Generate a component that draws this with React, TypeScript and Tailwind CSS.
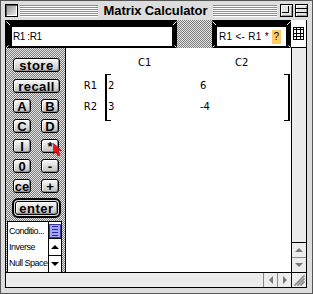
import React from 'react';

const dots =
  'bg-[repeating-conic-gradient(#7a7a7a_0%_25%,#e6e6e6_0%_50%)] bg-[length:2px_2px]';
const btn =
  'flex items-center justify-center h-[14px] border border-black rounded-[3px] bg-[linear-gradient(#f8f8f8,#c2c2c2)] shadow-[inset_1px_1px_0_#fff,inset_-1px_-1px_0_#8c8c8c] font-bold leading-none text-black';

function Corners({ w, h }: { w: number; h: number }) {
  return (
    <svg className="absolute left-0 top-0" width={w} height={h}>
      <g stroke="#fff" strokeWidth="1">
        <line x1="0.5" y1="1.5" x2="4" y2="5" />
        <line x1={w - 0.5} y1="1.5" x2={w - 4} y2="5" />
        <line x1="0.5" y1={h - 0.5} x2="2.5" y2={h - 2.5} />
        <line x1={w - 0.5} y1={h - 0.5} x2={w - 2.5} y2={h - 2.5} />
      </g>
    </svg>
  );
}

function Tri({ dir, fill = '#777' }: { dir: 'up' | 'down' | 'left' | 'right'; fill?: string }) {
  const vert = dir === 'up' || dir === 'down';
  const pts = {
    up: '0,4 4,0 8,4',
    down: '0,0 8,0 4,4',
    left: '4,0 4,8 0,4',
    right: '0,0 4,4 0,8',
  }[dir];
  return (
    <svg width={vert ? 8 : 4} height={vert ? 4 : 8}>
      <polygon points={pts} fill={fill} />
    </svg>
  );
}

function Stripes({ className }: { className: string }) {
  return (
    <div
      className={`h-[12px] bg-[repeating-linear-gradient(#8c8c8c_0px,#8c8c8c_1px,#fff_1px,#fff_2px)] ${className}`}
    />
  );
}

export default function App() {
  const keys = [
    ['A', 'B'],
    ['C', 'D'],
    ['I', '*'],
    ['0', '-'],
    ['ce', '+'],
  ];

  return (
    <div className="w-[313px] h-[294px] bg-[#dddddd] border border-[#555] flex flex-col font-['Liberation_Sans',sans-serif] text-black overflow-hidden">
      {/* title bar */}
      <div className="h-[19px] flex items-center pl-[4px] pr-[4px] shrink-0">
        <div className="w-[13px] h-[13px] border border-black bg-[linear-gradient(135deg,#8a8a8a,#f4f4f4)] shadow-[inset_1px_1px_0_#555,inset_-1px_-1px_0_#fff]" />
        <Stripes className="ml-[2px] w-[78px]" />
        <div className="w-[115px] text-center text-[13px] font-bold leading-none tracking-[-0.1px]">
          Matrix Calculator
        </div>
        <Stripes className="flex-1" />
        <div className="ml-[3px] w-[13px] h-[13px] border border-black bg-[#e4e4e4] shadow-[inset_1px_1px_0_#fff,inset_-1px_-1px_0_#999] relative">
          <div className="absolute left-[1px] top-[1px] w-[7px] h-[7px] border-r border-b border-black" />
        </div>
        <div className="ml-[2px] w-[13px] h-[13px] border border-black bg-[#e4e4e4] shadow-[inset_1px_1px_0_#fff,inset_-1px_-1px_0_#999] flex flex-col justify-center gap-[3px]">
          <div className="h-[1px] bg-black" />
          <div className="h-[1px] bg-black" />
        </div>
      </div>

      {/* content */}
      <div className="ml-[4px] w-[302px] border-x border-black flex flex-col shrink-0">
        {/* toolbar */}
        <div className="flex h-[28px]">
          <div className="w-[171px] bg-black pt-[7px] pb-[2px] pl-[6px] pr-[5px] relative">
            <Corners w={171} h={28} />
            <div className="h-full bg-white flex items-center pl-[1px] text-[10px] tracking-[-0.4px]">
              R1 :R1
            </div>
          </div>
          <div className={`w-[35px] ${dots}`} />
          <div className="w-[79px] bg-black pt-[7px] pb-[2px] px-[5px] relative">
            <Corners w={79} h={28} />
            <div className="h-full bg-white flex items-center pl-[2px] text-[10px] tracking-[0.3px] whitespace-nowrap">
              R1 &lt;- R1 *
              <span className="ml-[3px] bg-[#ffcc66] h-[14px] w-[9px] flex items-center justify-center">?</span>
            </div>
          </div>
          <div className="w-[15px] bg-white border-b border-black flex items-center justify-center">
            <svg width="11" height="13" viewBox="0 0 11 13">
              <g stroke="#000" strokeWidth="1" fill="none">
                <rect x="0.5" y="0.5" width="10" height="12" />
                <line x1="0.5" y1="2.5" x2="10.5" y2="2.5" />
                <line x1="0.5" y1="6.5" x2="10.5" y2="6.5" />
                <line x1="0.5" y1="9.5" x2="10.5" y2="9.5" />
                <line x1="3.5" y1="0.5" x2="3.5" y2="12.5" />
                <line x1="7.5" y1="0.5" x2="7.5" y2="12.5" />
              </g>
            </svg>
          </div>
        </div>

        {/* body */}
        <div className="flex h-[224px]">
          {/* keypad panel */}
          <div className={`w-[60px] border-r border-black flex flex-col pt-[10px] relative ${dots}`}>
            <div className={`${btn} ml-[7px] w-[47px] text-[13px] tracking-[0.5px]`}>store</div>
            <div className={`${btn} ml-[7px] w-[47px] mt-[7px] text-[13px] tracking-[0.4px]`}>recall</div>
            <div className="mt-[6px] flex flex-col gap-[6px]">
              {keys.map(([a, b]) => (
                <div key={a} className="flex ml-[7px] gap-[10px]">
                  <div className={`${btn} w-[18px] text-[13px]`}>{a}</div>
                  <div className={`${btn} w-[18px] text-[13px]`}>{b}</div>
                </div>
              ))}
            </div>
            <div className="mt-[5px] ml-[6px] w-[49px] h-[20px] border-2 border-black rounded-[6px] p-[1px] bg-[#dcdcdc]">
              <div className={`${btn} h-full text-[13px] tracking-[0.5px]`}>enter</div>
            </div>
            <div className="mt-[3px] ml-[1px] w-[55px] h-[51px] bg-white border-t border-x border-black flex">
              <div className="flex-1 pt-[1px] text-[9px] tracking-[-0.5px] overflow-hidden">
                {['Conditio...', 'Inverse', 'Null Space'].map((t) => (
                  <div key={t} className="h-[16px] leading-[16px] pl-[1px] whitespace-nowrap">
                    {t}
                  </div>
                ))}
              </div>
              <div className="w-[13px] border-l border-black flex flex-col">
                <div className="mt-[2px] h-[14px] border border-[#3a3a9a] bg-[#a4a4ff] flex flex-col items-center justify-center gap-[2px]">
                  <div className="w-[6px] h-[1px] bg-[#2a2a9a]" />
                  <div className="w-[6px] h-[1px] bg-[#2a2a9a]" />
                  <div className="w-[6px] h-[1px] bg-[#2a2a9a]" />
                  <div className="w-[6px] h-[1px] bg-[#2a2a9a]" />
                </div>
                <div className="flex-1 border-t border-black flex items-center justify-center">
                  <Tri dir="up" fill="#000" />
                </div>
                <div className="flex-1 border-t border-black flex items-center justify-center">
                  <Tri dir="down" fill="#000" />
                </div>
              </div>
            </div>
            <svg className="absolute left-[47px] top-[95px]" width="10" height="14" viewBox="0 0 10 14">
              <path d="M0.5 0.5 L0.5 11 L3 8.5 L5 13 L7 12 L5 7.5 L8.5 7.5 Z" fill="#e8111b" stroke="#a00" strokeWidth="0.6" />
            </svg>
          </div>

          {/* matrix */}
          <div className="w-[225px] bg-white font-['DejaVu_Sans',sans-serif] text-[10px]">
            <div className="flex h-[11px] mt-[9px] leading-[11px]">
              <span className="w-[72px]" />
              <span className="w-[97px]">C1</span>
              <span>C2</span>
            </div>
            <div className="flex mt-[6px]">
              <div className="w-[31px] text-right pt-[1px]">
                <div className="h-[21px] leading-[21px]">R1</div>
                <div className="h-[21px] leading-[21px]">R2</div>
              </div>
              <div className="ml-[8px] relative w-[185px] border-x-2 border-black pt-[1px] pb-[4px]">
                <div className="absolute left-0 top-0 w-[4px] h-[1px] bg-black" />
                <div className="absolute left-0 bottom-0 w-[4px] h-[1px] bg-black" />
                <div className="absolute right-0 top-0 w-[4px] h-[1px] bg-black" />
                <div className="absolute right-0 bottom-0 w-[4px] h-[1px] bg-black" />
                {[
                  ['2', '6'],
                  ['3', '-4'],
                ].map(([a, b]) => (
                  <div key={a} className="grid grid-cols-[92px_1fr] pl-[1px] h-[21px] leading-[21px]">
                    <span>{a}</span>
                    <span>{b}</span>
                  </div>
                ))}
              </div>
            </div>
          </div>

          {/* vertical scrollbar */}
          <div className="w-[15px] border-l border-black flex flex-col bg-[#ececec]">
            <div className="flex-1" />
            <div className="h-[15px] border-t border-black flex items-center justify-center">
              <Tri dir="up" />
            </div>
            <div className="h-[15px] border-t border-[#888] flex items-center justify-center">
              <Tri dir="down" />
            </div>
          </div>
        </div>

        {/* horizontal scrollbar */}
        <div className="flex h-[16px] border-y border-black bg-[#ececec]">
          <div className="flex-1" />
          <div className="w-[14px] border-l border-[#888] flex items-center justify-center">
            <Tri dir="left" />
          </div>
          <div className="w-[14px] border-l border-[#888] flex items-center justify-center">
            <Tri dir="right" />
          </div>
          <div className="w-[15px] border-l border-black flex items-center justify-center">
            <svg width="13" height="13" viewBox="0 0 13 13">
              <g strokeWidth="1.6" strokeLinecap="square">
                <line x1="2" y1="11" x2="11" y2="2" stroke="#888" />
                <line x1="5" y1="11" x2="11" y2="5" stroke="#888" />
                <line x1="8" y1="11" x2="11" y2="8" stroke="#888" />
              </g>
            </svg>
          </div>
        </div>
      </div>
    </div>
  );
}
